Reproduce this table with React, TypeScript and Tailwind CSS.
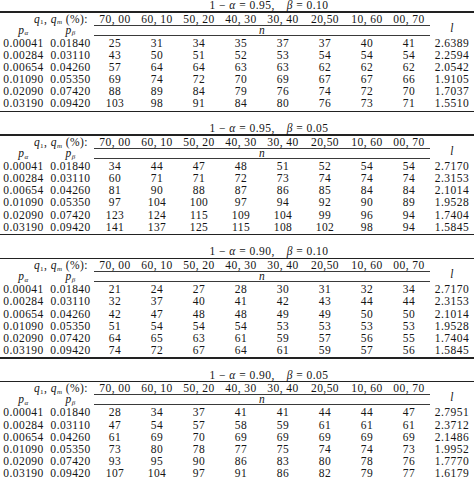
const cols = ['70, 00', '60, 10', '50, 20', '40, 30', '30, 40', '20,50', '10, 60', '00, 70'];

const pa = ['0.00041', '0.00284', '0.00654', '0.01090', '0.02090', '0.03190'];
const pb = ['0.01840', '0.03110', '0.04260', '0.05350', '0.07420', '0.09420'];

type Block = { alpha: string; beta: string; rows: number[][]; l: string[] };

const blocks: Block[] = [
  {
    alpha: '0.95',
    beta: '0.10',
    rows: [
      [25, 31, 34, 35, 37, 37, 40, 41],
      [43, 50, 51, 52, 53, 54, 54, 54],
      [57, 64, 64, 63, 63, 62, 62, 62],
      [69, 74, 72, 70, 69, 67, 67, 66],
      [88, 89, 84, 79, 76, 74, 72, 70],
      [103, 98, 91, 84, 80, 76, 73, 71],
    ],
    l: ['2.6389', '2.2594', '2.0542', '1.9105', '1.7037', '1.5510'],
  },
  {
    alpha: '0.95',
    beta: '0.05',
    rows: [
      [34, 44, 47, 48, 51, 52, 54, 54],
      [60, 71, 71, 72, 73, 74, 74, 74],
      [81, 90, 88, 87, 86, 85, 84, 84],
      [97, 104, 100, 97, 94, 92, 90, 89],
      [123, 124, 115, 109, 104, 99, 96, 94],
      [141, 137, 125, 115, 108, 102, 98, 94],
    ],
    l: ['2.7170', '2.3153', '2.1014', '1.9528', '1.7404', '1.5845'],
  },
  {
    alpha: '0.90',
    beta: '0.10',
    rows: [
      [21, 24, 27, 28, 30, 31, 32, 34],
      [32, 37, 40, 41, 42, 43, 44, 44],
      [42, 47, 48, 48, 49, 49, 50, 50],
      [51, 54, 54, 54, 53, 53, 53, 53],
      [64, 65, 63, 61, 59, 57, 56, 55],
      [74, 72, 67, 64, 61, 59, 57, 56],
    ],
    l: ['2.7170', '2.3153', '2.1014', '1.9528', '1.7404', '1.5845'],
  },
  {
    alpha: '0.90',
    beta: '0.05',
    rows: [
      [28, 34, 37, 41, 41, 44, 44, 47],
      [47, 54, 57, 58, 59, 61, 61, 61],
      [61, 69, 70, 69, 69, 69, 69, 69],
      [73, 80, 78, 77, 75, 74, 74, 73],
      [93, 95, 90, 86, 83, 80, 78, 76],
      [107, 104, 97, 91, 86, 82, 79, 77],
    ],
    l: ['2.7951', '2.3712', '2.1486', '1.9952', '1.7770', '1.6179'],
  },
];

const grid = 'grid grid-cols-[47px_47px_repeat(8,42px)_44px]';

function TableBlock({ b }: { b: Block }) {
  return (
    <div className="mb-[11.2px]">
      {/* title */}
      <div className="flex h-[11px] items-center justify-center pl-[94px] pr-[30px] leading-none">
        <span>
          1 − <i>α</i> = {b.alpha},
        </span>
        <span className="ml-[12px]">
          <i>β</i> = {b.beta}
        </span>
      </div>
      <div className="h-[1.5px] bg-[#222]" />

      {/* column header */}
      <div className={`${grid} h-[12px] leading-[12px]`}>
        <div className="col-span-2 pr-[6px] text-right">
          <i>q</i>
          <sub className="text-[7px] not-italic">1</sub>, <i>q</i>
          <sub className="text-[7px] italic">m</sub> (%):
        </div>
        {cols.map((c) => (
          <div key={c} className="border-b border-[#3a3a3a] text-center">
            {c}
          </div>
        ))}
        <div />
      </div>

      <div className={`${grid} h-[11px] leading-[10px]`}>
        <div className="text-center">
          <i>p</i>
          <sub className="text-[7px] italic">α</sub>
        </div>
        <div className="text-center">
          <i>p</i>
          <sub className="text-[7px] italic">β</sub>
        </div>
        <div className="col-span-8 border-b border-[#3a3a3a] text-center">
          <i>n</i>
        </div>
        <div className="-translate-y-[2px] text-center">
          <i>l</i>
        </div>
      </div>

      {/* data */}
      <div className="pt-[1px]">
        {b.rows.map((r, i) => (
          <div key={i} className={`${grid} h-[12.2px] leading-[12px]`}>
            <div className="text-center">{pa[i]}</div>
            <div className="text-center">{pb[i]}</div>
            {r.map((v, j) => (
              <div key={j} className="text-center">
                {v}
              </div>
            ))}
            <div className="text-center">{b.l[i]}</div>
          </div>
        ))}
      </div>
      <div className="mt-[1px] h-[1.5px] bg-[#222]" />
    </div>
  );
}

export default function App() {
  return (
    <div className="h-[480px] w-[474px] overflow-hidden bg-white font-['Liberation_Serif',serif] text-[11.5px] tracking-[0.45px] text-[#151515]">
      {blocks.map((b, i) => (
        <TableBlock key={i} b={b} />
      ))}
    </div>
  );
}
